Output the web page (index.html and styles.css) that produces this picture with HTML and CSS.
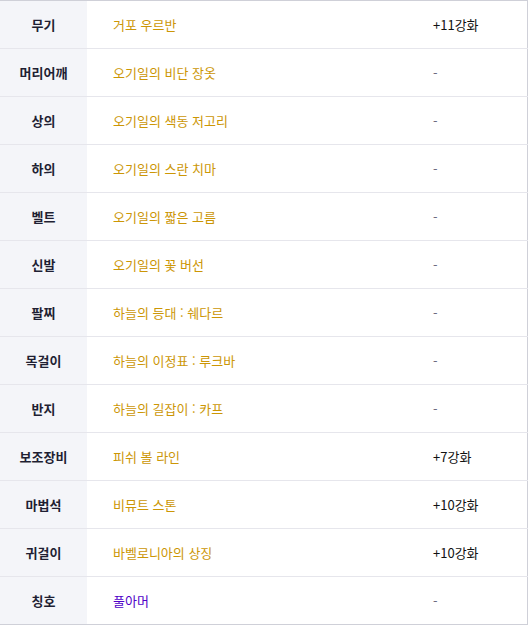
FILE: index.html
```html
<!DOCTYPE html>
<html lang="ko">
<head>
<meta charset="utf-8">
<link rel="stylesheet" href="styles.css">
</head>
<body>
<table class="equip">
<tbody>
<tr><th>무기</th><td class="item">거포 우르반</td><td class="star">+11강화</td></tr>
<tr><th>머리어깨</th><td class="item">오기일의 비단 장옷</td><td class="star none">-</td></tr>
<tr><th>상의</th><td class="item">오기일의 색동 저고리</td><td class="star none">-</td></tr>
<tr><th>하의</th><td class="item">오기일의 스란 치마</td><td class="star none">-</td></tr>
<tr><th>벨트</th><td class="item">오기일의 짧은 고름</td><td class="star none">-</td></tr>
<tr><th>신발</th><td class="item">오기일의 꽃 버선</td><td class="star none">-</td></tr>
<tr><th>팔찌</th><td class="item">하늘의 등대 : 쉐다르</td><td class="star none">-</td></tr>
<tr><th>목걸이</th><td class="item">하늘의 이정표 : 루크바</td><td class="star none">-</td></tr>
<tr><th>반지</th><td class="item">하늘의 길잡이 : 카프</td><td class="star none">-</td></tr>
<tr><th>보조장비</th><td class="item">피쉬 볼 라인</td><td class="star">+7강화</td></tr>
<tr><th>마법석</th><td class="item">비뮤트 스톤</td><td class="star">+10강화</td></tr>
<tr><th>귀걸이</th><td class="item">바벨로니아의 상징</td><td class="star">+10강화</td></tr>
<tr class="last"><th>칭호</th><td class="item epic">풀아머</td><td class="star none">-</td></tr>
</tbody>
</table>
</body>
</html>
```
FILE: styles.css
```css
html, body {
  margin: 0;
  padding: 0;
  background: #ffffff;
}
body {
  font-family: "Noto Sans CJK KR", "Noto Sans", sans-serif;
  font-size: 13px;
}
.equip {
  width: 528px;
  border-collapse: collapse;
  table-layout: fixed;
  border-top: 1px solid #cfd0d8;
  border-right: 1px solid #cfd0d8;
}
.equip tr {
  height: 48px;
}
.equip th, .equip td {
  height: 47px;
  padding: 0;
  border-bottom: 1px solid #e6e6ec;
  vertical-align: middle;
  line-height: 16px;
}
.equip tr.last th, .equip tr.last td {
  border-bottom: 1px solid #cfd0d8;
}
.equip th {
  width: 87px;
  background: #f4f5f9;
  color: #1f1f33;
  font-weight: 700;
  text-align: center;
}
.equip td.item {
  width: 294px;
  padding-left: 26px;
  color: #cc9605;
}
.equip td.item.epic {
  color: #5000c8;
}
.equip td.star {
  padding-left: 26px;
  color: #111111;
}
.equip td.star.none {
  color: #6b6b80;
}
```
